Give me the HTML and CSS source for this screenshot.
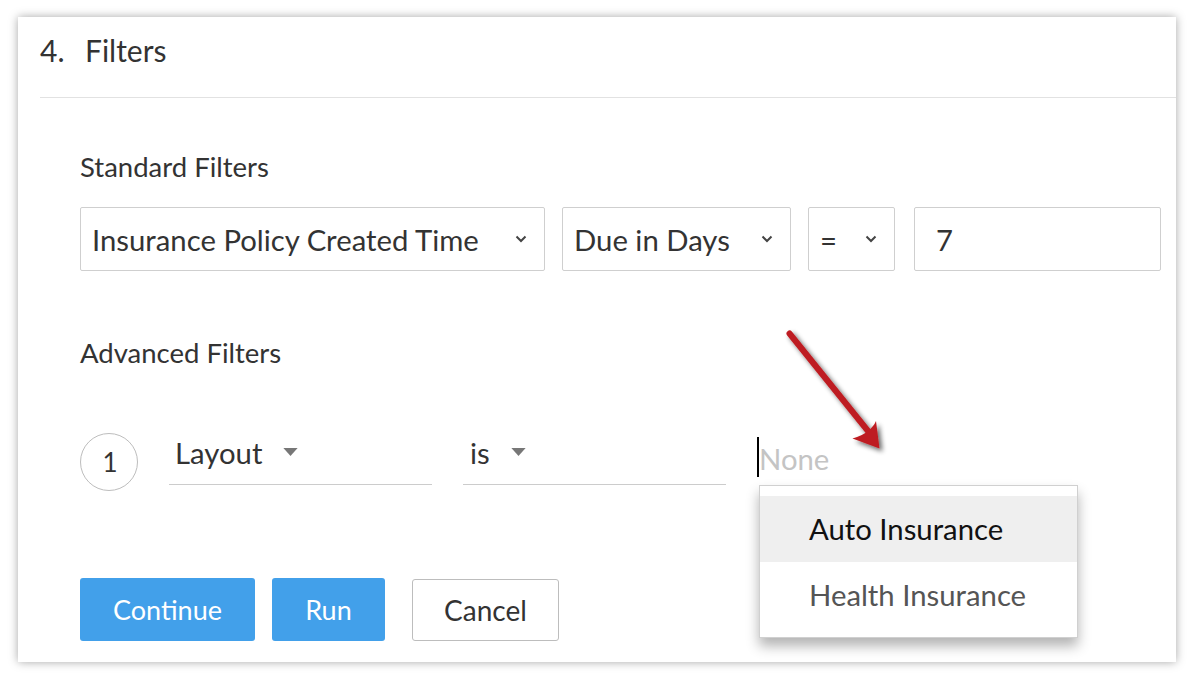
FILE: index.html
```html
<!DOCTYPE html>
<html>
<head>
<meta charset="utf-8">
<link rel="stylesheet" href="styles.css">
</head>
<body>
<div class="card">
  <div class="head"><span class="num">4.</span><span>Filters</span></div>
  <div class="body">
    <div class="label first">Standard Filters</div>
    <div class="std-row">
      <div class="sel w1"><span>Insurance Policy Created Time</span><svg class="chev" viewBox="0 0 12 8"><path d="M1.5 1.5 L6 6 L10.5 1.5"/></svg></div>
      <div class="sel w2"><span>Due in Days</span><svg class="chev" viewBox="0 0 12 8"><path d="M1.5 1.5 L6 6 L10.5 1.5"/></svg></div>
      <div class="sel w3"><span>=</span><svg class="chev" viewBox="0 0 12 8"><path d="M1.5 1.5 L6 6 L10.5 1.5"/></svg></div>
      <div class="sel w4"><span>7</span></div>
    </div>
    <div class="label second">Advanced Filters</div>
    <div class="adv-row">
      <div class="circle">1</div>
      <div class="field"><span>Layout</span><svg class="caret" viewBox="0 0 16 9"><path d="M0 0 H16 L8 9 Z"/></svg></div>
      <div class="field"><span>is</span><svg class="caret" viewBox="0 0 16 9"><path d="M0 0 H16 L8 9 Z"/></svg></div>
      <div class="value">
        <span class="cursor">None</span>
        <div class="menu">
          <div class="item active">Auto Insurance</div>
          <div class="item">Health Insurance</div>
        </div>
      </div>
    </div>
    <div class="btn-row">
      <button class="btn primary b-cont">Continue</button>
      <button class="btn primary b-run">Run</button>
      <button class="btn ghost">Cancel</button>
    </div>
  </div>
</div>
<svg class="arrow" viewBox="0 0 1194 680" width="1194" height="680">
  <defs>
    <filter id="sh" x="-20%" y="-20%" width="140%" height="140%">
      <feGaussianBlur in="SourceAlpha" stdDeviation="2.5"/>
      <feOffset dx="3" dy="3" result="b"/>
      <feComponentTransfer><feFuncA type="linear" slope="0.6"/></feComponentTransfer>
      <feMerge><feMergeNode/><feMergeNode in="SourceGraphic"/></feMerge>
    </filter>
  </defs>
  <g filter="url(#sh)">
    <line x1="789.5" y1="333.5" x2="868" y2="431" stroke="#be1e22" stroke-width="6" stroke-linecap="round"/>
    <path d="M852.5 438.5 Q862 436 868 431 Q874 426 876 421 L879.5 448.5 Z" fill="#be1e22"/>
  </g>
</svg>
</body>
</html>
```

FILE: styles.css
```css
html, body {
  margin: 0;
  padding: 0;
  background: #fff;
}
body {
  font-family: Lato, "Open Sans", "Liberation Sans", sans-serif;
  color: #333;
  width: 1194px;
  height: 680px;
  overflow: hidden;
  position: relative;
}
.card {
  margin: 17px 18px;
  width: 1158px;
  height: 645px;
  background: #fff;
  box-shadow: 0 0 9px rgba(0, 0, 0, 0.35);
  box-sizing: border-box;
}
.head {
  margin-left: 22px;
  padding-top: 14px;
  height: 66px;
  line-height: 38px;
  font-size: 30px;
  color: #333;
  border-bottom: 1px solid #e2e2e2;
  display: flex;
}
.head .num {
  width: 45px;
}
.body {
  padding-left: 62px;
}
.label {
  font-size: 27.5px;
  line-height: 34px;
  color: #333;
}
.label.first { margin-top: 52px; }
.label.second { margin-top: 65px; }
.std-row {
  margin-top: 23px;
  display: flex;
  gap: 17px;
}
.sel {
  height: 64px;
  box-sizing: border-box;
  border: 1px solid #cfcfcf;
  border-radius: 2px;
  display: flex;
  align-items: center;
  justify-content: space-between;
  padding: 0 17px 0 11px;
  font-size: 29.3px;
  color: #333;
}
.w1 { width: 465px; }
.w2 { width: 229px; }
.w3 { width: 87px; }
.w4 { width: 247px; margin-left: 2px; padding-left: 21px; }
.chev {
  width: 12px;
  height: 8px;
  fill: none;
  stroke: #444;
  stroke-width: 2;
}
.adv-row {
  margin-top: 63px;
  display: flex;
  align-items: flex-start;
}
.circle {
  width: 58px;
  height: 58px;
  box-sizing: border-box;
  border: 1px solid #bdbdbd;
  border-radius: 50%;
  display: flex;
  align-items: center;
  justify-content: center;
  padding-left: 2px;
  font-size: 26px;
  color: #333;
}
.field {
  margin-left: 31px;
  width: 263px;
  height: 52px;
  box-sizing: border-box;
  border-bottom: 1px solid #cccccc;
  padding: 0 0 0 6px;
  display: flex;
  align-items: flex-start;
  font-size: 29.3px;
  line-height: 40px;
  color: #333;
}
.caret {
  width: 15px;
  height: 8px;
  fill: #777;
  margin-top: 15px;
  margin-left: 21px;
}
.field + .field {
  padding-left: 7px;
}
.value {
  margin-left: 31px;
  position: relative;
  height: 52px;
  width: 330px;
}
.cursor {
  display: inline-block;
  margin-top: 4px;
  border-left: 2px solid #000;
  height: 40px;
  line-height: 44px;
  font-size: 29.3px;
  color: #c4c4c4;
}
.menu {
  position: absolute;
  top: 52px;
  left: 2px;
  width: 319px;
  height: 153px;
  box-sizing: border-box;
  border: 1px solid #d0d0d0;
  background: #fff;
  padding-top: 10px;
  box-shadow: 0 8px 12px rgba(0, 0, 0, 0.3);
}
.item {
  height: 66px;
  line-height: 66px;
  padding-left: 49px;
  font-size: 29.3px;
  color: #555;
}
.item.active {
  background: #efefef;
  color: #111;
}
.btn-row {
  margin-top: 87px;
  display: flex;
  align-items: flex-start;
}
.btn {
  font-family: Lato, "Open Sans", "Liberation Sans", sans-serif;
  font-size: 27px;
  height: 63px;
  border-radius: 3px;
  padding: 0;
  cursor: pointer;
}
.primary {
  background: #42a0ea;
  border: none;
  color: #fff;
}
.b-cont { width: 175px; }
.b-run { width: 113px; margin-left: 17px; }
.ghost {
  margin-left: 27px;
  margin-top: 1px;
  width: 147px;
  height: 62px;
  background: #fff;
  border: 1px solid #bdbdbd;
  color: #333;
  font-size: 28px;
}
.arrow {
  position: absolute;
  left: 0;
  top: 0;
  pointer-events: none;
}
```
